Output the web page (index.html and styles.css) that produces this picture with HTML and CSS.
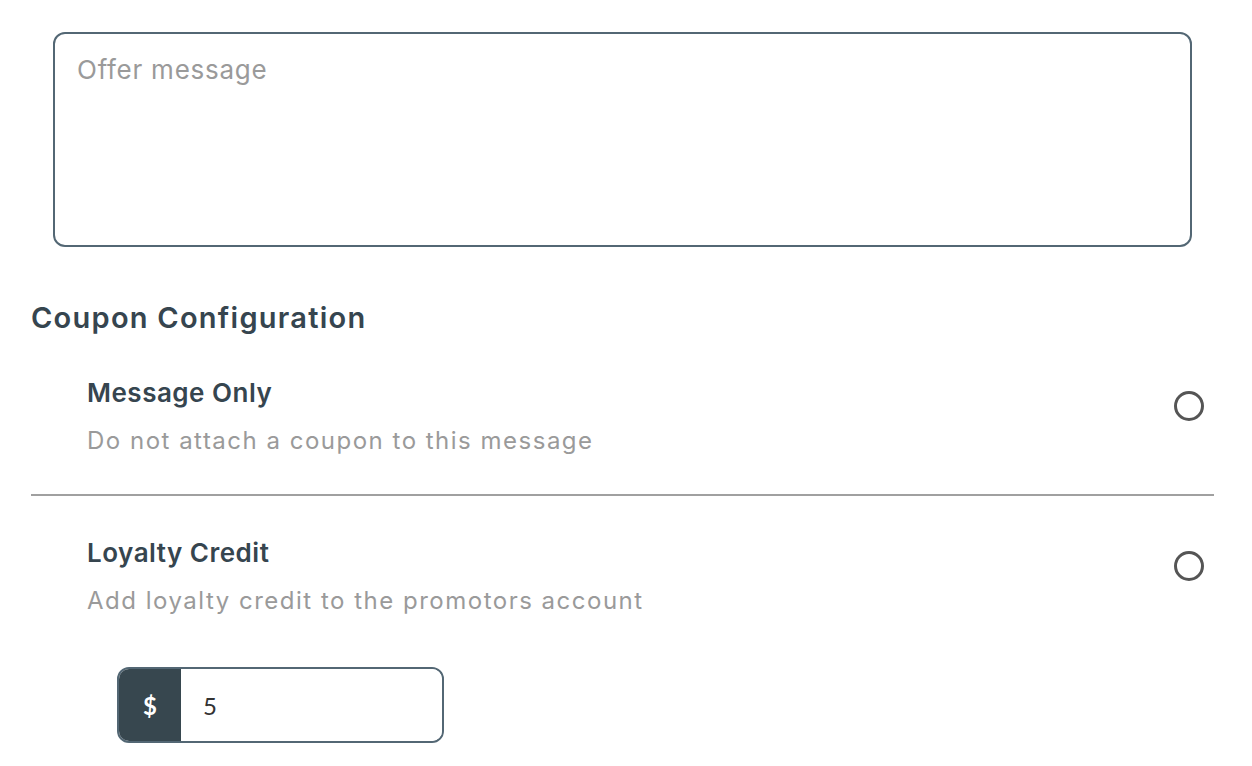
FILE: index.html
```html
<!DOCTYPE html>
<html>
<head>
<meta charset="utf-8">
<link rel="stylesheet" href="styles.css">
</head>
<body>
<div class="page">
  <div class="msg-wrap">
    <textarea class="msg" placeholder="Offer message"></textarea>
  </div>
  <h2 class="section-title">Coupon Configuration</h2>
  <div class="option">
    <div class="option-text">
      <div class="option-title">Message Only</div>
      <div class="option-desc">Do not attach a coupon to this message</div>
    </div>
    <span class="radio"></span>
  </div>
  <hr class="divider">
  <div class="option option-second">
    <div class="option-text">
      <div class="option-title">Loyalty Credit</div>
      <div class="option-desc">Add loyalty credit to the promotors account</div>
    </div>
    <span class="radio"></span>
  </div>
  <div class="amount">
    <span class="amount-prefix">$</span>
    <input class="amount-input" type="text" value="5">
  </div>
</div>
</body>
</html>
```

FILE: styles.css
```css
* { box-sizing: border-box; }
html, body { margin: 0; padding: 0; background: #fff; }
body { font-family: "Inter", "Lato", "Liberation Sans", sans-serif; color: #36454f; }
.page { padding: 32px 38px 0 31px; }
.msg-wrap { padding: 0 22px; }
.msg {
  display: block;
  width: 100%;
  height: 215px;
  border: 2px solid #536774;
  border-radius: 12px;
  padding: 20px 22px;
  font-family: inherit;
  font-size: 26px;
  line-height: 1.2;
  letter-spacing: 0.75px;
  resize: none;
  outline: none;
}
.msg::placeholder { color: #9a9a9a; }
.section-title {
  margin: 51px 0 0 0;
  font-size: 29px;
  font-weight: 600;
  line-height: 40px;
  letter-spacing: 1.25px;
  color: #36454f;
}
.option {
  display: flex;
  align-items: flex-start;
  justify-content: space-between;
  padding: 37px 10px 35px 56px;
}
.option-second { padding-top: 39px; padding-bottom: 0; }
.option-title {
  font-size: 26px;
  font-weight: 600;
  line-height: 36px;
  letter-spacing: 0.5px;
  color: #36454f;
}
.option-desc {
  font-size: 24px;
  line-height: 36px;
  margin-top: 12px;
  letter-spacing: 1.5px;
  color: #9a9a9a;
}
.radio {
  flex: none;
  width: 30px; height: 30px;
  border: 3px solid #555;
  border-radius: 50%;
  margin-top: 16px;
}
.divider { margin: 0; border: 0; border-top: 2px solid #a0a0a0; }
.amount {
  display: flex;
  width: 327px;
  height: 76px;
  margin: 48px 0 0 86px;
  border: 2px solid #536774;
  border-radius: 12px;
  overflow: hidden;
}
.amount-prefix {
  flex: none;
  width: 62px;
  background: #37474f;
  color: #fff;
  font-weight: 700;
  font-size: 24px;
  display: flex; align-items: center; justify-content: center;
  font-family: "Lato", sans-serif;
}
.amount-input {
  flex: 1;
  min-width: 0;
  border: 0;
  outline: none;
  padding: 0 22px;
  font-family: "Lato", sans-serif;
  font-size: 24px;
  color: #333;
  background: #fff;
}
```
